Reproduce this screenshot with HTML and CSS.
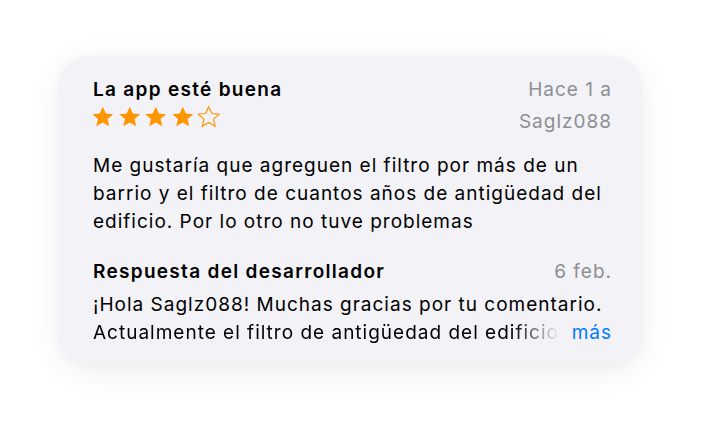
FILE: index.html
```html
<!DOCTYPE html>
<html lang="es">
<head>
<meta charset="utf-8">
<link rel="stylesheet" href="styles.css">
</head>
<body>
<div class="stage">
  <div class="card">
    <div class="head">
      <div class="head-left">
        <div class="title">La app esté buena</div>
        <div class="stars">
          <svg class="star" viewBox="0 0 24 24"><path d="M12 1.8l3.1 6.9 7.5.7-5.7 5 1.7 7.4L12 17.9 5.4 21.8l1.7-7.4-5.7-5 7.5-.7z"/></svg>
          <svg class="star" viewBox="0 0 24 24"><path d="M12 1.8l3.1 6.9 7.5.7-5.7 5 1.7 7.4L12 17.9 5.4 21.8l1.7-7.4-5.7-5 7.5-.7z"/></svg>
          <svg class="star" viewBox="0 0 24 24"><path d="M12 1.8l3.1 6.9 7.5.7-5.7 5 1.7 7.4L12 17.9 5.4 21.8l1.7-7.4-5.7-5 7.5-.7z"/></svg>
          <svg class="star" viewBox="0 0 24 24"><path d="M12 1.8l3.1 6.9 7.5.7-5.7 5 1.7 7.4L12 17.9 5.4 21.8l1.7-7.4-5.7-5 7.5-.7z"/></svg>
          <svg class="star empty" viewBox="0 0 24 24"><path d="M12 1.8l3.1 6.9 7.5.7-5.7 5 1.7 7.4L12 17.9 5.4 21.8l1.7-7.4-5.7-5 7.5-.7z"/></svg>
        </div>
      </div>
      <div class="head-right">
        <div class="meta">Hace 1 a</div>
        <div class="meta">Saglz088</div>
      </div>
    </div>
    <p class="body">Me gustaría que agreguen el filtro por más de un barrio y el filtro de cuantos años de antigüedad del edificio. Por lo otro no tuve problemas</p>
    <div class="reply-head">
      <div class="reply-title">Respuesta del desarrollador</div>
      <div class="date">6 feb.</div>
    </div>
    <div class="reply">
      <div class="line">¡Hola Saglz088! Muchas gracias por tu comentario.</div>
      <div class="line last"><span class="clip">Actualmente el filtro de antigüedad del edificio</span><span class="more">más</span></div>
    </div>
  </div>
</div>
</body>
</html>
```

FILE: styles.css
```css
* { box-sizing: border-box; }
html, body { margin: 0; padding: 0; background: #ffffff; }
body {
  font-family: Inter, "Liberation Sans", sans-serif;
  font-size: 19px;
  letter-spacing: 1px;
  color: #000;
  width: 704px;
  height: 424px;
  overflow: hidden;
}
.stage {
  padding: 56px 0 0 59px;
}
.card {
  width: 583px;
  height: 309px;
  background: #f2f2f7;
  border-radius: 30px;
  box-shadow: 0 6px 32px rgba(0, 0, 0, 0.075), 0 1px 6px rgba(0, 0, 0, 0.025);
  padding: 20px 31px 0 34px;
}
.head {
  display: flex;
  justify-content: space-between;
}
.title {
  font-weight: 600;
  line-height: 28px;
  letter-spacing: 1.3px;
}
.stars {
  display: flex;
  gap: 3px;
  margin-top: 1px;
  margin-left: -2px;
}
.star {
  width: 23.5px;
  height: 23.5px;
  fill: #ff9500;
}
.star.empty {
  fill: none;
  stroke: #ff9500;
  stroke-width: 1.2;
}
.head-right {
  text-align: right;
  margin-top: -2px;
  margin-right: -1px;
}
.meta {
  line-height: 32px;
  color: #8e8e93;
}
.body {
  margin: 14px 0 0;
  line-height: 28px;
}
.reply-head {
  display: flex;
  justify-content: space-between;
  margin-top: 22px;
  line-height: 28px;
}
.reply-title {
  font-weight: 600;
  letter-spacing: 1.3px;
}
.date {
  color: #8e8e93;
  margin-right: -1px;
}
.reply {
  line-height: 28px;
  margin-top: 5px;
}
.line { white-space: nowrap; }
.line.last {
  display: flex;
  justify-content: space-between;
}
.clip {
  width: 466px;
  overflow: hidden;
  -webkit-mask-image: linear-gradient(to right, #000 90%, transparent 100%);
  mask-image: linear-gradient(to right, #000 90%, transparent 100%);
}
.more {
  color: #007aff;
  margin-right: -1px;
}
```
